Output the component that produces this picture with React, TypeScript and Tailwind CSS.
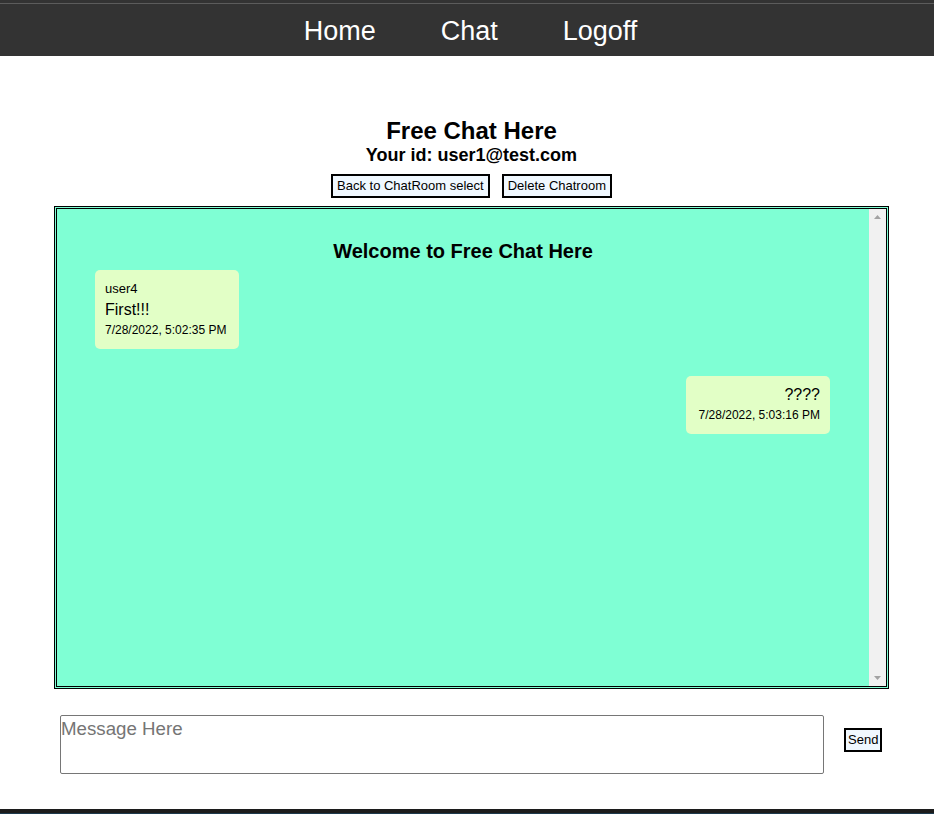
import React from "react";

const font = { fontFamily: '"Trebuchet MS", "Liberation Sans", Arial, sans-serif' };

function Bubble({ user, text, time, mine }: { user?: string; text: string; time: string; mine?: boolean }) {
  return (
    <div className={`w-fit min-w-[144px] rounded-[5px] bg-[#e2ffc6] px-[10px] py-[10px] text-black ${mine ? "ml-auto text-right" : "text-left"}`}>
      {user && <div className="text-[13px] leading-[18px]">{user}</div>}
      <div className={`text-[16px] ${user ? "leading-[24px]" : "leading-[18px]"}`}>{text}</div>
      <div className={`text-[12px] ${user ? "leading-[17px]" : "mt-[2px] leading-[18px]"}`}>{time}</div>
    </div>
  );
}

export default function App() {
  const btn = "border-2 border-black bg-[#f0f8ff] px-[4px] text-[13px] leading-[20px] text-black";

  return (
    <div className="min-h-[814px] bg-white" style={font}>
      <nav className="h-[56px] bg-[#333333] pt-[3px]">
        <div className="h-full border-t border-[#5c5c5c] pl-[7px]">
          <div className="flex h-full items-center justify-center gap-[65px] pt-[2px] text-[27px] text-white">
            <a href="#">Home</a>
            <a href="#">Chat</a>
            <a href="#">Logoff</a>
          </div>
        </div>
      </nav>

      <main className="pl-[9px] pt-[61px]">
        <h1 className="text-center text-[24px] font-bold leading-[28px] text-black">Free Chat Here</h1>
        <h2 className="text-center text-[18px] font-bold leading-[21px] text-black">Your id: user1@test.com</h2>

        <div className="mt-[8px] flex justify-center gap-[12px]">
          <button type="button" className={btn}>Back to ChatRoom select</button>
          <button type="button" className={btn}>Delete Chatroom</button>
        </div>

        <div className="mx-auto mt-[8px] flex h-[483px] w-[835px] border-[3px] border-double border-black bg-[#7fffd4]">
          <div className="flex-1">
            <h3 className="pt-[31px] text-center text-[20px] font-bold leading-[22px] text-black">Welcome to Free Chat Here</h3>
            <div className="flex flex-col px-[38px] pt-[8px]">
              <Bubble user="user4" text="First!!!" time="7/28/2022, 5:02:35 PM" />
              <div className="mt-[27px] pr-[1px]">
                <Bubble text="????" time="7/28/2022, 5:03:16 PM" mine />
              </div>
            </div>
          </div>
          <div className="flex w-[17px] flex-col items-center justify-between bg-[#f1f1f1] py-[6px]">
            <svg width="7" height="4" viewBox="0 0 7 4"><path d="M3.5 0L7 4H0z" fill="#a3a3a3" /></svg>
            <svg width="7" height="4" viewBox="0 0 7 4"><path d="M0 0h7L3.5 4z" fill="#a3a3a3" /></svg>
          </div>
        </div>

        <div className="mx-auto mt-[26px] flex w-[823px] items-start">
          <textarea
            placeholder="Message Here"
            className="h-[59px] w-[764px] shrink-0 resize-none rounded-[2px] border border-[#767676] bg-white px-0 py-0 text-[18.7px] leading-[25px] text-black outline-none placeholder:text-[#757575]"
            style={font}
          />
          <button type="button" className={`${btn} ml-[20px] mt-[13px] shrink-0 !px-[2px]`}>Send</button>
        </div>
      </main>

      <div className="mt-[35px] h-[5px] border-b border-[#1d3a4d] bg-[#1c1c1c]" />
    </div>
  );
}
